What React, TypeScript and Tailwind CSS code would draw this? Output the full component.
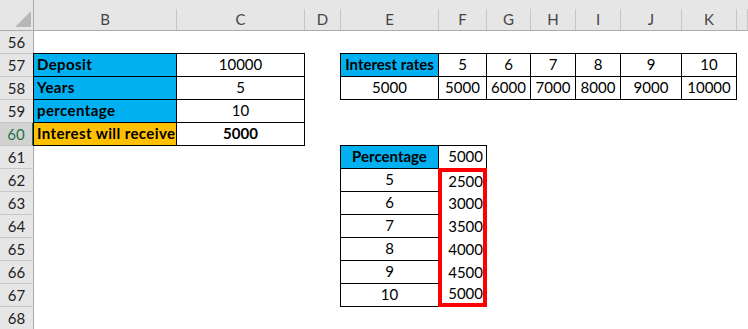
import React from 'react';

type Fill = 'blue' | 'orange';
type Align = 'left' | 'center' | 'right';
type Mark = 'top' | 'mid' | 'bottom';

interface Cell {
  v: string;
  bold?: boolean;
  fill?: Fill;
  align?: Align;
  mark?: Mark;
}

const COLS = ['B', 'C', 'D', 'E', 'F', 'G', 'H', 'I', 'J', 'K', 'L'];
const ROWS = [56, 57, 58, 59, 60, 61, 62, 63, 64, 65, 66, 67, 68];
const SELECTED_ROW = 60;

const rates = [5, 6, 7, 8, 9, 10];
const percentages = [5, 6, 7, 8, 9, 10];

// sheet contents keyed by A1 address
const cells: Record<string, Cell> = {
  B57: { v: 'Deposit', bold: true, fill: 'blue', align: 'left' },
  C57: { v: '10000' },
  B58: { v: 'Years', bold: true, fill: 'blue', align: 'left' },
  C58: { v: '5' },
  B59: { v: 'percentage', bold: true, fill: 'blue', align: 'left' },
  C59: { v: '10' },
  B60: { v: 'Interest will receive', bold: true, fill: 'orange', align: 'left' },
  C60: { v: '5000', bold: true },
  E57: { v: 'Interest rates', bold: true, fill: 'blue' },
  E58: { v: '5000' },
  E61: { v: 'Percentage', bold: true, fill: 'blue' },
  F61: { v: '5000', align: 'right' },
};

rates.forEach((r, i) => {
  const col = COLS[5 + i - 1];
  cells[`${col}57`] = { v: String(r) };
  cells[`${col}58`] = { v: String(r * 1000) };
});

percentages.forEach((p, i) => {
  const row = 62 + i;
  cells[`E${row}`] = { v: String(p) };
  cells[`F${row}`] = {
    v: String(p * 500),
    align: 'right',
    mark: i === 0 ? 'top' : i === percentages.length - 1 ? 'bottom' : 'mid',
  };
});

const fillClass: Record<Fill, string> = {
  blue: 'bg-[#00b0f0]',
  orange: 'bg-[#ffc000]',
};

const alignClass: Record<Align, string> = {
  left: 'justify-start pl-[3px] tracking-[0.4px]',
  center: 'justify-center',
  right: 'justify-end pr-[3px]',
};

const markClass: Record<Mark, string> = {
  top: '-mt-px border-x-4 border-t-4',
  mid: 'border-x-4',
  bottom: 'border-x-4 border-b-4',
};

function CornerCell() {
  return (
    <div className="flex items-end justify-end border-b border-r border-[#ababab] bg-[#e6e6e6] pb-[3px] pr-[2px]">
      <svg width="16" height="16" viewBox="0 0 16 16">
        <polygon points="16,0 16,16 0,16" fill="#b7b7b7" />
      </svg>
    </div>
  );
}

function ColumnHeader({ label }: { label: string }) {
  return (
    <div className="flex items-end border-b border-[#ababab] bg-[#e6e6e6]">
      <div className="flex h-[21px] w-full items-center justify-center border-r border-[#c6c6c6] text-[15px] leading-none text-[#444]">
        {label}
      </div>
    </div>
  );
}

function RowHeader({ n }: { n: number }) {
  const selected = n === SELECTED_ROW;
  return (
    <div
      className={
        selected
          ? 'flex items-center justify-center border-b border-r-2 border-b-[#c6c6c6] border-r-[#217346] bg-[#d2d2d2] text-[15px] leading-none text-[#217346]'
          : 'flex items-center justify-center border-b border-r border-b-[#c6c6c6] border-r-[#ababab] bg-[#e6e6e6] text-[15px] leading-none text-[#222]'
      }
    >
      {n}
    </div>
  );
}

function SheetCell({ cell }: { cell?: Cell }) {
  if (!cell) return <div />;

  const align = alignClass[cell.align ?? 'center'];
  const weight = cell.bold ? 'font-bold' : 'font-normal';

  if (cell.mark) {
    // red outline round the result column
    return (
      <div
        className={`-ml-px flex items-center justify-end border-[#ff0000] text-[15px] leading-none text-black ${markClass[cell.mark]}`}
      >
        <span className="pb-px">{cell.v}</span>
      </div>
    );
  }

  return (
    <div
      className={`-ml-px -mt-px flex items-center border border-black text-[15px] leading-none text-black ${align} ${weight} ${
        cell.fill ? fillClass[cell.fill] : 'bg-white'
      }`}
    >
      <span className="pb-px whitespace-nowrap">{cell.v}</span>
    </div>
  );
}

export default function App() {
  return (
    <div className="h-[329px] w-full overflow-hidden bg-white font-['Lato',sans-serif]">
      <div className="grid grid-cols-[34px_143px_128px_36px_98px_48px_44px_45px_45px_61px_55px_1fr] grid-rows-[31px_repeat(13,23px)]">
        <CornerCell />
        {COLS.map((c) => (
          <ColumnHeader key={c} label={c === 'L' ? '' : c} />
        ))}

        {ROWS.map((r) => (
          <React.Fragment key={r}>
            <RowHeader n={r} />
            {COLS.map((c) => (
              <SheetCell key={`${c}${r}`} cell={cells[`${c}${r}`]} />
            ))}
          </React.Fragment>
        ))}
      </div>
    </div>
  );
}
